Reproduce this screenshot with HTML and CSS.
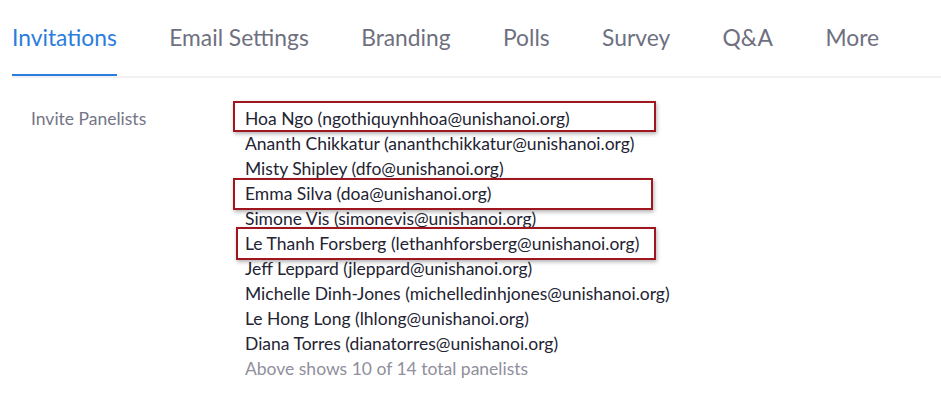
FILE: index.html
```html
<!DOCTYPE html>
<html>
<head>
<meta charset="utf-8">
<link rel="stylesheet" href="styles.css">
</head>
<body>
<div class="page">
  <nav class="tabs">
    <div class="tab active">Invitations</div>
    <div class="tab">Email Settings</div>
    <div class="tab">Branding</div>
    <div class="tab">Polls</div>
    <div class="tab">Survey</div>
    <div class="tab">Q&amp;A</div>
    <div class="tab">More</div>
  </nav>
  <section class="row">
    <div class="label">Invite Panelists</div>
    <ul class="list">
      <li class="hl hl1">Hoa Ngo (ngothiquynhhoa@unishanoi.org)</li>
      <li>Ananth Chikkatur (ananthchikkatur@unishanoi.org)</li>
      <li>Misty Shipley (dfo@unishanoi.org)</li>
      <li class="hl hl2">Emma Silva (doa@unishanoi.org)</li>
      <li>Simone Vis (simonevis@unishanoi.org)</li>
      <li class="hl hl3">Le Thanh Forsberg (lethanhforsberg@unishanoi.org)</li>
      <li>Jeff Leppard (jleppard@unishanoi.org)</li>
      <li>Michelle Dinh-Jones (michelledinhjones@unishanoi.org)</li>
      <li>Le Hong Long (lhlong@unishanoi.org)</li>
      <li>Diana Torres (dianatorres@unishanoi.org)</li>
      <li class="note">Above shows 10 of 14 total panelists</li>
    </ul>
  </section>
</div>
</body>
</html>
```
FILE: styles.css
```css
html, body {
  margin: 0;
  padding: 0;
  background: #ffffff;
}
body {
  font-family: Lato, "Open Sans", sans-serif;
  color: #232333;
}
.page {
  width: 941px;
  height: 402px;
  overflow: hidden;
}
.tabs {
  display: flex;
  gap: 52.4px;
  margin-left: 12px;
  height: 76px;
  border-bottom: 2px solid #f2f2f4;
}
.tab {
  font-size: 22.8px;
  color: #6e7080;
  padding-top: 23px;
  height: 53px;
  box-sizing: border-box;
  position: relative;
}
.tab.active {
  color: #2a7ddc;
}
.tab.active::after {
  content: "";
  position: absolute;
  left: 0;
  right: 0;
  bottom: -23px;
  height: 2px;
  background: #2a7ddc;
}
.row {
  display: flex;
  padding-top: 28px;
}
.label {
  width: 214px;
  padding-left: 31px;
  font-size: 17.5px;
  color: #747487;
  line-height: 25px;
}
.list {
  list-style: none;
  margin: 0;
  padding: 0;
  font-size: 17.5px;
  line-height: 25px;
}
.list li {
  position: relative;
}
.list .note {
  color: #8f8f9d;
}
.hl::before {
  content: "";
  position: absolute;
  box-sizing: border-box;
  border: 2.5px solid #a0161f;
  box-shadow: 1px 2px 4px rgba(0,0,0,0.3);
}
.hl1::before { left: -12px; top: -5px; width: 423px; height: 31px; }
.hl2::before { left: -12px; top: -3px; width: 420px; height: 32px; }
.hl3::before { left: -9px; top: -4px; width: 420px; height: 33px; }
```
